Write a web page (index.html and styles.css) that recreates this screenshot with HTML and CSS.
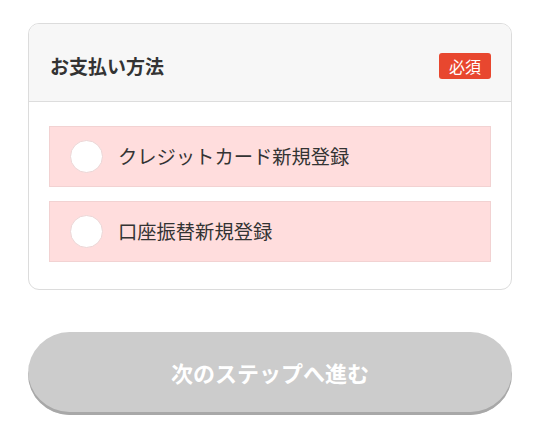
FILE: index.html
```html
<!DOCTYPE html>
<html lang="ja">
<head>
<meta charset="utf-8">
<link rel="stylesheet" href="styles.css">
</head>
<body>
<div class="page">
  <section class="card">
    <div class="card-head">
      <h2 class="title">お支払い方法</h2>
      <span class="badge">必須</span>
    </div>
    <div class="card-body">
      <label class="option"><span class="radio"></span><span class="label">クレジットカード新規登録</span></label>
      <label class="option"><span class="radio"></span><span class="label">口座振替新規登録</span></label>
    </div>
  </section>
  <button class="next" type="button">次のステップへ進む</button>
</div>
</body>
</html>
```
FILE: styles.css
```css
* { box-sizing: border-box; }
html, body { margin: 0; padding: 0; background: #fff; }
body {
  font-family: "Noto Sans CJK JP", "Noto Sans", sans-serif;
  color: #333;
}
.page {
  padding: 23px 28px 0 28px;
  display: flex;
  flex-direction: column;
}
.card {
  border: 1px solid #dcdcdc;
  border-radius: 11px;
  overflow: hidden;
  background: #fff;
}
.card-head {
  height: 78px;
  background: #f7f7f7;
  border-bottom: 1px solid #dddddd;
  display: flex;
  align-items: center;
  justify-content: space-between;
  padding: 0 20px 0 21px;
}
.title {
  margin: 0;
  font-size: 19px;
  font-weight: 700;
  color: #333;
  line-height: 1;
  padding-top: 6px;
}
.badge {
  background: #e8472f;
  color: #fff;
  font-size: 16px;
  line-height: 26px;
  height: 26px;
  padding: 0 10px;
  border-radius: 3px;
  margin-top: 6px;
}
.card-body {
  padding: 24px 20px 27px 20px;
  display: flex;
  flex-direction: column;
  gap: 14px;
}
.option {
  height: 61px;
  background: #ffdddd;
  border: 1px solid #f2d2d2;
  display: flex;
  align-items: center;
  padding-left: 20px;
  gap: 15px;
}
.radio {
  width: 33px;
  height: 33px;
  border-radius: 50%;
  background: #fff;
  border: 1px solid #ecd6d6;
  flex: none;
}
.label {
  font-size: 19.3px;
  color: #333;
  line-height: 1;
}
.next {
  margin-top: 42px;
  height: 83px;
  border: none;
  border-radius: 42px;
  background: #cccccc;
  box-shadow: inset 0 -3px 0 #a8a8a8;
  color: #fff;
  font-family: "Noto Sans CJK JP", "Noto Sans", sans-serif;
  font-size: 22px;
  font-weight: 700;
  padding: 0 0 3px 0;
}
```
